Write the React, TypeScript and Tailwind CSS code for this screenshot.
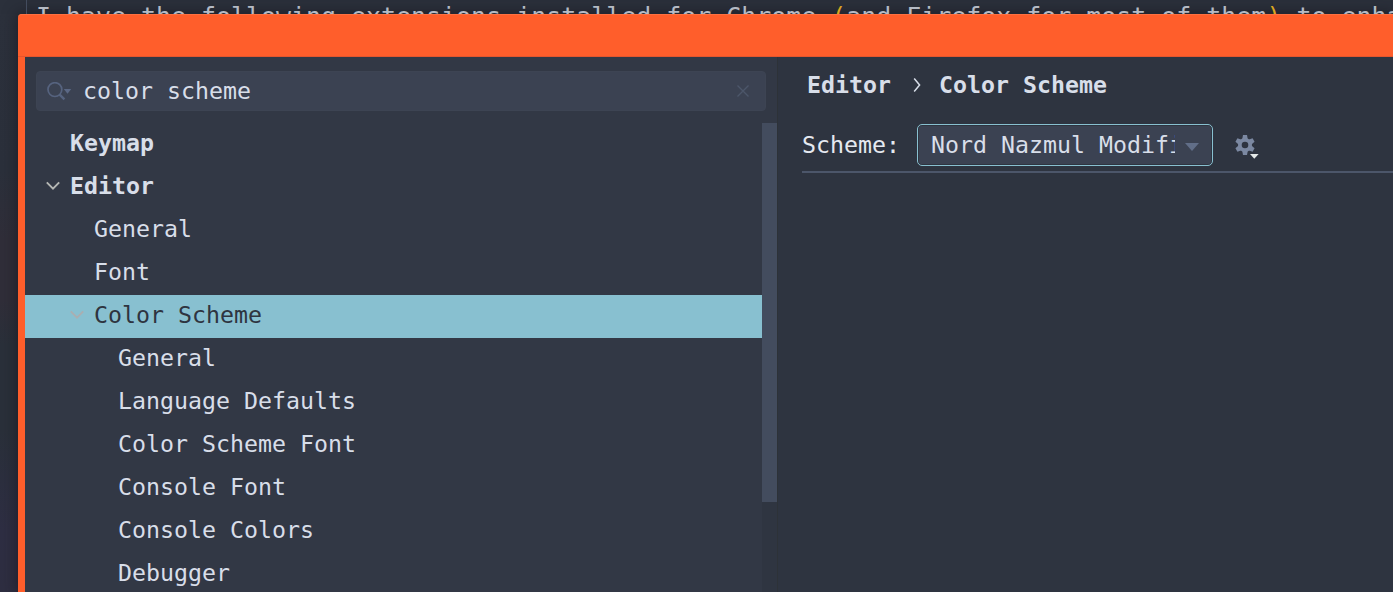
import React from "react";

type Row = { label: string; pad: string; bold?: boolean; open?: boolean; selected?: boolean };

const rows: Row[] = [
  { label: "Keymap", pad: "pl-[17px]", bold: true },
  { label: "Editor", pad: "pl-[17px]", bold: true, open: true },
  { label: "General", pad: "pl-[41px]" },
  { label: "Font", pad: "pl-[41px]" },
  { label: "Color Scheme", pad: "pl-[41px]", open: true, selected: true },
  { label: "General", pad: "pl-[65px]" },
  { label: "Language Defaults", pad: "pl-[65px]" },
  { label: "Color Scheme Font", pad: "pl-[65px]" },
  { label: "Console Font", pad: "pl-[65px]" },
  { label: "Console Colors", pad: "pl-[65px]" },
  { label: "Debugger", pad: "pl-[65px]" },
];

function Chevron({ selected }: { selected?: boolean }) {
  return (
    <svg
      width="14"
      height="10"
      viewBox="0 0 14 10"
      fill="none"
      strokeWidth="1.9"
      className={selected ? "stroke-[#aaaeb1]" : "stroke-[#b5b7b4]"}
    >
      <path d="M0.8 1.3 L7 7.7 L13.2 1.3" />
    </svg>
  );
}

function TreeRow({ row }: { row: Row }) {
  return (
    <div className={`flex h-[43px] shrink-0 items-center pb-[4px] ${row.pad} ${row.selected ? "bg-[#88c0d0]" : ""}`}>
      <span className="flex w-7 justify-start pl-1">{row.open && <Chevron selected={row.selected} />}</span>
      <span
        className={`pb-px whitespace-pre ${row.bold ? "font-bold" : ""} ${
          row.selected ? "text-[#2e3440]" : "text-[#d8dee9]"
        }`}
      >
        {row.label}
      </span>
    </div>
  );
}

function SearchField() {
  return (
    <div className="mt-[14px] ml-[11px] flex h-10 w-[730px] shrink-0 items-center rounded-[4px] border border-[#3d4453] bg-[#3b4252] pr-[15px] pl-[10px]">
      <svg className="mt-[2px]" width="25" height="20" viewBox="0 0 25 20" fill="none">
        <circle cx="7.9" cy="7.6" r="6.9" stroke="#56637f" strokeWidth="1.7" />
        <path d="M12.4 12.3 L17.4 17.3" stroke="#56637f" strokeWidth="2.4" />
        <path d="M16.8 7 H24.2 L20.5 11.8 Z" fill="#5b6885" />
      </svg>
      <span className="ml-[11px] flex-1 pb-[2px] whitespace-pre text-[#d8dee9]">color scheme</span>
      <svg width="14" height="14" viewBox="0 0 14 14" fill="none" stroke="#4c566a" strokeWidth="1.4">
        <path d="M1.5 1.5 L12.5 12.5 M12.5 1.5 L1.5 12.5" />
      </svg>
    </div>
  );
}

function Gear() {
  return (
    <svg width="26" height="28" viewBox="0 0 26 28">
      <g transform="translate(10 11)" fill="#7b88a1">
        <path
          fillRule="evenodd"
          d="M-7 0 A7 7 0 1 0 7 0 A7 7 0 1 0 -7 0 Z M-3.3 0 A3.3 3.3 0 1 1 3.3 0 A3.3 3.3 0 1 1 -3.3 0 Z"
        />
        {[0, 60, 120, 180, 240, 300].map((a) => (
          <path key={a} transform={`rotate(${a})`} d="M-2.8 -5.5 L-2 -9.9 H2 L2.8 -5.5 Z" />
        ))}
      </g>
      <path d="M15 20 H23.6 L19.3 24.8 Z" fill="#e5e9e9" />
    </svg>
  );
}

export default function App() {
  return (
    <div className="relative h-[592px] w-[1393px] overflow-hidden bg-[linear-gradient(to_bottom,#2c313c_0px,#2b303b_170px,#302e39_240px,#302e39_300px,#2a303a_345px,#2a303a_430px,#2e2e43_530px,#2e2e41_592px)] font-['DejaVu_Sans_Mono',monospace] text-[23.25px] leading-[27px]">
      <div className="flex h-[14px] overflow-hidden bg-[#2b303b]">
        <div className="h-[14px] w-[27px] shrink-0 border-r border-[#434c5e]" />
        <div className="pt-[2px] pl-[9px] text-[24.93px] leading-[30px] whitespace-pre text-[#b5bac4]">
          I have the following extensions installed for Chrome <span className="text-[#d9a520]">(</span>and Firefox for
          most of them<span className="text-[#d9a520]">)</span> to enhance
        </div>
      </div>

      <div className="ml-[18px] flex h-[578px] flex-col rounded-tl-[4px] bg-[#ff5e2b] shadow-[0_0_14px_2px_rgba(24,22,28,0.6)]">
        <div className="h-[43px] shrink-0 rounded-tl-[4px] border-t border-b border-t-[#ff7040] border-b-[#e5552d]" />
        <div className="ml-[7px] flex h-[535px] bg-[#2e3440]">
          <div className="flex w-[752px] shrink-0 flex-col bg-[#323845]">
            <SearchField />
            <div className="mt-3 flex h-[469px]">
              <div className="flex w-[737px] flex-col overflow-hidden">
                {rows.map((row, i) => (
                  <TreeRow key={i} row={row} />
                ))}
              </div>
              <div className="w-[15px] bg-[#2f3541]">
                <div className="h-[379px] bg-[#434c5e]" />
              </div>
            </div>
          </div>
          <div className="flex flex-1 flex-col border-l border-[#2d3238]">
            <div className="mt-[14px] ml-[29px] flex h-[27px] items-center font-bold whitespace-pre text-[#d8dee9]">
              <span>Editor</span>
              <svg className="mt-px mr-[18px] ml-[22px]" width="8" height="16" viewBox="0 0 8 16" fill="none">
                <path d="M1.2 1.5 L6.6 8 L1.2 14.5" stroke="#d8dee9" strokeWidth="1.5" />
              </svg>
              <span>Color Scheme</span>
            </div>
            <div className="mt-[26px] ml-6 flex h-[49px] items-start border-b-2 border-[#4c566a]">
              <span className="mt-[7px] w-[115px] shrink-0 whitespace-pre text-[#e5e9f0]">Scheme:</span>
              <div className="flex h-[42px] w-[296px] shrink-0 items-center rounded-[5px] border-[1.5px] border-[#88c0d0] bg-[#2e3440] p-[1px]">
                <div className="flex h-full w-full items-center rounded-[2px] bg-[#3b4252] pl-3">
                  <span className="w-[244px] overflow-hidden pb-[2px] whitespace-pre text-[#d8dee9]">Nord Nazmul Modified</span>
                  <svg className="mt-1 ml-[10px]" width="14" height="8" viewBox="0 0 14 8">
                    <path d="M0 0 H14 L7 8 Z" fill="#616e88" />
                  </svg>
                </div>
              </div>
              <div className="mt-[10px] ml-[22px]">
                <Gear />
              </div>
            </div>
          </div>
        </div>
      </div>
    </div>
  );
}
